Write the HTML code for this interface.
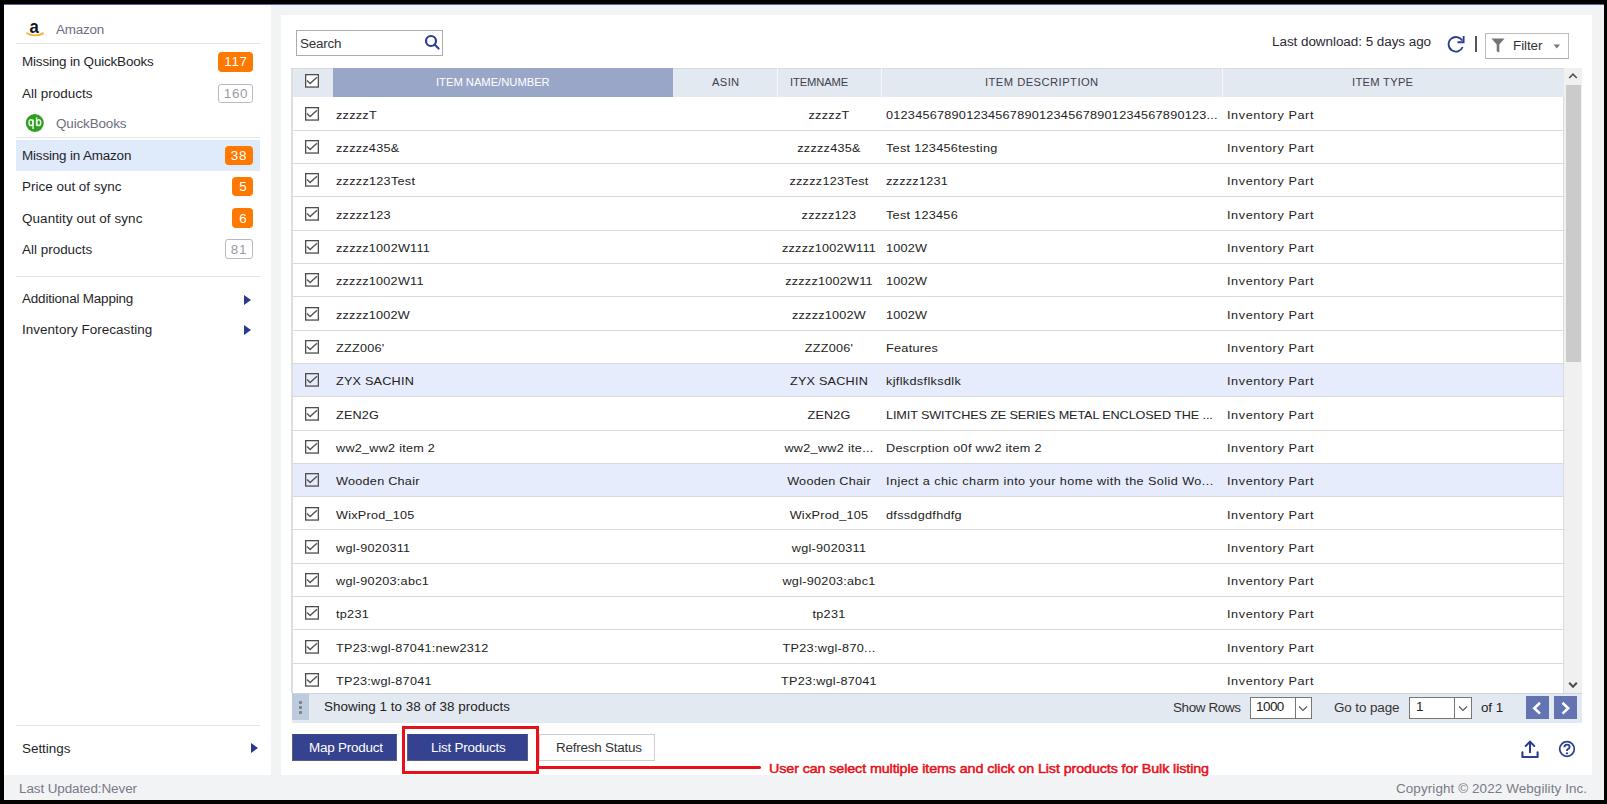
<!DOCTYPE html>
<html><head><meta charset="utf-8"><style>
*{margin:0;padding:0;box-sizing:border-box}
html,body{width:1607px;height:804px;overflow:hidden;background:#000;font-family:"Liberation Sans", sans-serif}
.a{position:absolute}
.t{position:absolute;white-space:pre;line-height:1;font-family:"Liberation Sans", sans-serif}
.rl{position:absolute;left:293px;width:1271px;height:1px;background:#d9d9d9}
.cb{position:absolute}
.div{position:absolute;left:16px;width:244px;height:1px;background:#e3e3e3}
.badge{position:absolute;background:#ff7800;border-radius:4px;height:19.5px}
.obadge{position:absolute;border:1.3px solid #b9b9c0;border-radius:3px;height:19.5px;background:#fff}
.tri{position:absolute;width:0;height:0;border-top:5px solid transparent;border-bottom:5px solid transparent;border-left:7.5px solid #2b3990}
</style></head><body>
<div class="a" style="left:4px;top:4px;width:1600px;height:796px;background:#f2f3f5"></div>
<div class="a" style="left:4px;top:4px;width:1600px;height:1px;background:#5668ad"></div>
<div class="a" style="left:4px;top:5px;width:267px;height:770px;background:#fff"></div>
<div class="a" style="left:281px;top:15px;width:1311px;height:760px;background:#fff"></div>
<div class="div" style="top:43px"></div>
<div class="div" style="top:137px"></div>
<div class="div" style="top:276px"></div>
<div class="div" style="top:725px"></div>
<div class="a" style="left:16px;top:140px;width:244px;height:31px;background:#dfeafb"></div>
<div class="badge" style="left:218px;top:52px;width:35px"></div>
<div class="obadge" style="left:218px;top:83.5px;width:35px"></div>
<div class="badge" style="left:225px;top:145.5px;width:28px"></div>
<div class="badge" style="left:232.3px;top:176.7px;width:20.7px"></div>
<div class="badge" style="left:232.3px;top:208px;width:20.7px"></div>
<div class="obadge" style="left:225px;top:239.2px;width:28px"></div>
<div class="tri" style="left:244px;top:294.6px"></div>
<div class="tri" style="left:244px;top:324.8px"></div>
<div class="tri" style="left:251px;top:743.2px"></div>
<svg class="a" style="left:0px;top:0px" width="60" height="60" viewBox="0 0 60 60"><text x="29.6" y="32.6" font-family="Liberation Sans" font-weight="bold" font-size="18.5" fill="#141414" textLength="9.3" lengthAdjust="spacingAndGlyphs">a</text><path d="M26.9 33.3 Q34.5 37.4 42.6 33.6" fill="none" stroke="#f8b03c" stroke-width="1.8" stroke-linecap="round"/><circle cx="42.8" cy="33.4" r="1.1" fill="#f8b03c"/></svg>
<svg class="a" style="left:0px;top:100px" width="60" height="40" viewBox="0 100 60 40"><circle cx="34.8" cy="123" r="9" fill="#2ca01c"/><ellipse cx="31" cy="122.7" rx="2" ry="2.9" fill="none" stroke="#e6f3e3" stroke-width="1.5"/><path d="M33.1 119.6 L33.1 129" stroke="#e6f3e3" stroke-width="1.5"/><ellipse cx="38.7" cy="122.7" rx="2" ry="2.9" fill="none" stroke="#e6f3e3" stroke-width="1.5"/><path d="M36.6 117.2 L36.6 125.9" stroke="#e6f3e3" stroke-width="1.5"/></svg>
<div class="a" style="left:296px;top:30px;width:147px;height:26px;border:1px solid #adadad;background:#fff"></div>
<svg class="a" style="left:424px;top:34px" width="17" height="17" viewBox="0 0 17 17"><circle cx="7" cy="7" r="5" fill="none" stroke="#2b3d92" stroke-width="2.2"/><path d="M10.6 10.6 L14.6 14.6" stroke="#2b3d92" stroke-width="2.1" stroke-linecap="round"/></svg>
<svg class="a" style="left:1440px;top:30px" width="30" height="30" viewBox="1440 30 30 30"><path d="M1462.68 47.01 A7.3 7.3 0 1 1 1462.22 40.65" fill="none" stroke="#2b3d92" stroke-width="1.8"/><path d="M1457.4 42.3 L1463.6 42.3 L1463.6 36.1" fill="none" stroke="#2b3d92" stroke-width="1.9"/></svg>
<div class="a" style="left:1474.8px;top:36.2px;width:2px;height:15.5px;background:#555"></div>
<div class="a" style="left:1485px;top:33px;width:84px;height:26px;border:1px solid #bdbdbd;border-bottom-color:#aaa;background:#fff"></div>
<svg class="a" style="left:1491px;top:38px" width="14" height="15" viewBox="0 0 14 15"><path d="M0.5 0.5 L13.5 0.5 L8.3 6.5 L8.3 14.5 L5.7 13.2 L5.7 6.5 Z" fill="#757575"/></svg>
<svg class="a" style="left:1552.5px;top:43.5px" width="8" height="5" viewBox="0 0 8 5"><path d="M0.5 0.5 L7 0.5 L3.75 4.6 Z" fill="#777"/></svg>
<div class="a" style="left:292px;top:67.5px;width:1272px;height:29.5px;background:#e3e9f1;border-top:1.5px solid #d9d9d9"></div>
<div class="a" style="left:333px;top:68px;width:340px;height:29px;background:#99a6c8"></div>
<div class="a" style="left:777px;top:68px;width:1px;height:29px;background:#f4f6f9"></div>
<div class="a" style="left:881px;top:68px;width:1px;height:29px;background:#f4f6f9"></div>
<div class="a" style="left:1222px;top:68px;width:1px;height:29px;background:#f4f6f9"></div>
<svg class="a" style="left:305px;top:74px" width="14" height="14" viewBox="0 0 14 14"><rect x="0.65" y="0.65" width="12.7" height="12.4" fill="#fff" stroke="#4d4d4d" stroke-width="1.3"/><path d="M2 6.6 L5.1 9.6 L12 3.2" fill="none" stroke="#555" stroke-width="1.4"/></svg>
<div class="a" style="left:291px;top:67.5px;width:2px;height:625.5px;background:#dedede"></div>
<div class="a" style="left:1563px;top:97px;width:1px;height:596px;background:#dcdcdc"></div>
<div class="rl" style="top:130px"></div>
<svg class="cb" style="left:305px;top:106.80px" width="14" height="14" viewBox="0 0 14 14"><rect x="0.65" y="0.65" width="12.7" height="12.4" fill="none" stroke="#4d4d4d" stroke-width="1.3"/><path d="M2 6.6 L5.1 9.6 L12 3.2" fill="none" stroke="#555" stroke-width="1.4"/></svg>
<div class="rl" style="top:163px"></div>
<svg class="cb" style="left:305px;top:140.11px" width="14" height="14" viewBox="0 0 14 14"><rect x="0.65" y="0.65" width="12.7" height="12.4" fill="none" stroke="#4d4d4d" stroke-width="1.3"/><path d="M2 6.6 L5.1 9.6 L12 3.2" fill="none" stroke="#555" stroke-width="1.4"/></svg>
<div class="rl" style="top:196px"></div>
<svg class="cb" style="left:305px;top:173.42px" width="14" height="14" viewBox="0 0 14 14"><rect x="0.65" y="0.65" width="12.7" height="12.4" fill="none" stroke="#4d4d4d" stroke-width="1.3"/><path d="M2 6.6 L5.1 9.6 L12 3.2" fill="none" stroke="#555" stroke-width="1.4"/></svg>
<div class="rl" style="top:230px"></div>
<svg class="cb" style="left:305px;top:206.73px" width="14" height="14" viewBox="0 0 14 14"><rect x="0.65" y="0.65" width="12.7" height="12.4" fill="none" stroke="#4d4d4d" stroke-width="1.3"/><path d="M2 6.6 L5.1 9.6 L12 3.2" fill="none" stroke="#555" stroke-width="1.4"/></svg>
<div class="rl" style="top:263px"></div>
<svg class="cb" style="left:305px;top:240.04px" width="14" height="14" viewBox="0 0 14 14"><rect x="0.65" y="0.65" width="12.7" height="12.4" fill="none" stroke="#4d4d4d" stroke-width="1.3"/><path d="M2 6.6 L5.1 9.6 L12 3.2" fill="none" stroke="#555" stroke-width="1.4"/></svg>
<div class="rl" style="top:296px"></div>
<svg class="cb" style="left:305px;top:273.35px" width="14" height="14" viewBox="0 0 14 14"><rect x="0.65" y="0.65" width="12.7" height="12.4" fill="none" stroke="#4d4d4d" stroke-width="1.3"/><path d="M2 6.6 L5.1 9.6 L12 3.2" fill="none" stroke="#555" stroke-width="1.4"/></svg>
<div class="rl" style="top:330px"></div>
<svg class="cb" style="left:305px;top:306.66px" width="14" height="14" viewBox="0 0 14 14"><rect x="0.65" y="0.65" width="12.7" height="12.4" fill="none" stroke="#4d4d4d" stroke-width="1.3"/><path d="M2 6.6 L5.1 9.6 L12 3.2" fill="none" stroke="#555" stroke-width="1.4"/></svg>
<div class="rl" style="top:363px"></div>
<svg class="cb" style="left:305px;top:339.97px" width="14" height="14" viewBox="0 0 14 14"><rect x="0.65" y="0.65" width="12.7" height="12.4" fill="none" stroke="#4d4d4d" stroke-width="1.3"/><path d="M2 6.6 L5.1 9.6 L12 3.2" fill="none" stroke="#555" stroke-width="1.4"/></svg>
<div style="position:absolute;left:293px;top:364.48px;width:1270px;height:32.31px;background:#e6ecfb"></div>
<div class="rl" style="top:396px"></div>
<svg class="cb" style="left:305px;top:373.28px" width="14" height="14" viewBox="0 0 14 14"><rect x="0.65" y="0.65" width="12.7" height="12.4" fill="none" stroke="#4d4d4d" stroke-width="1.3"/><path d="M2 6.6 L5.1 9.6 L12 3.2" fill="none" stroke="#555" stroke-width="1.4"/></svg>
<div class="rl" style="top:430px"></div>
<svg class="cb" style="left:305px;top:406.59px" width="14" height="14" viewBox="0 0 14 14"><rect x="0.65" y="0.65" width="12.7" height="12.4" fill="none" stroke="#4d4d4d" stroke-width="1.3"/><path d="M2 6.6 L5.1 9.6 L12 3.2" fill="none" stroke="#555" stroke-width="1.4"/></svg>
<div class="rl" style="top:463px"></div>
<svg class="cb" style="left:305px;top:439.90px" width="14" height="14" viewBox="0 0 14 14"><rect x="0.65" y="0.65" width="12.7" height="12.4" fill="none" stroke="#4d4d4d" stroke-width="1.3"/><path d="M2 6.6 L5.1 9.6 L12 3.2" fill="none" stroke="#555" stroke-width="1.4"/></svg>
<div style="position:absolute;left:293px;top:464.41px;width:1270px;height:32.31px;background:#e6ecfb"></div>
<div class="rl" style="top:496px"></div>
<svg class="cb" style="left:305px;top:473.21px" width="14" height="14" viewBox="0 0 14 14"><rect x="0.65" y="0.65" width="12.7" height="12.4" fill="none" stroke="#4d4d4d" stroke-width="1.3"/><path d="M2 6.6 L5.1 9.6 L12 3.2" fill="none" stroke="#555" stroke-width="1.4"/></svg>
<div class="rl" style="top:529px"></div>
<svg class="cb" style="left:305px;top:506.52px" width="14" height="14" viewBox="0 0 14 14"><rect x="0.65" y="0.65" width="12.7" height="12.4" fill="none" stroke="#4d4d4d" stroke-width="1.3"/><path d="M2 6.6 L5.1 9.6 L12 3.2" fill="none" stroke="#555" stroke-width="1.4"/></svg>
<div class="rl" style="top:563px"></div>
<svg class="cb" style="left:305px;top:539.83px" width="14" height="14" viewBox="0 0 14 14"><rect x="0.65" y="0.65" width="12.7" height="12.4" fill="none" stroke="#4d4d4d" stroke-width="1.3"/><path d="M2 6.6 L5.1 9.6 L12 3.2" fill="none" stroke="#555" stroke-width="1.4"/></svg>
<div class="rl" style="top:596px"></div>
<svg class="cb" style="left:305px;top:573.14px" width="14" height="14" viewBox="0 0 14 14"><rect x="0.65" y="0.65" width="12.7" height="12.4" fill="none" stroke="#4d4d4d" stroke-width="1.3"/><path d="M2 6.6 L5.1 9.6 L12 3.2" fill="none" stroke="#555" stroke-width="1.4"/></svg>
<div class="rl" style="top:629px"></div>
<svg class="cb" style="left:305px;top:606.45px" width="14" height="14" viewBox="0 0 14 14"><rect x="0.65" y="0.65" width="12.7" height="12.4" fill="none" stroke="#4d4d4d" stroke-width="1.3"/><path d="M2 6.6 L5.1 9.6 L12 3.2" fill="none" stroke="#555" stroke-width="1.4"/></svg>
<div class="rl" style="top:663px"></div>
<svg class="cb" style="left:305px;top:639.76px" width="14" height="14" viewBox="0 0 14 14"><rect x="0.65" y="0.65" width="12.7" height="12.4" fill="none" stroke="#4d4d4d" stroke-width="1.3"/><path d="M2 6.6 L5.1 9.6 L12 3.2" fill="none" stroke="#555" stroke-width="1.4"/></svg>
<div class="rl" style="top:696px"></div>
<svg class="cb" style="left:305px;top:673.07px" width="14" height="14" viewBox="0 0 14 14"><rect x="0.65" y="0.65" width="12.7" height="12.4" fill="none" stroke="#4d4d4d" stroke-width="1.3"/><path d="M2 6.6 L5.1 9.6 L12 3.2" fill="none" stroke="#555" stroke-width="1.4"/></svg>
<div class="a" style="left:1564px;top:67.5px;width:17.5px;height:625px;background:#f0f0f0"></div>
<div class="a" style="left:1566px;top:85.3px;width:15px;height:276.5px;background:#cbcbcb"></div>
<svg class="a" style="left:1568px;top:72px" width="10" height="8" viewBox="0 0 10 8"><path d="M1.2 6 L5 2.2 L8.8 6" fill="none" stroke="#505050" stroke-width="1.6"/></svg>
<svg class="a" style="left:1568px;top:680.5px" width="10" height="8" viewBox="0 0 10 8"><path d="M1.2 1.8 L5 5.8 L8.8 1.8" fill="none" stroke="#4a4a4a" stroke-width="2"/></svg>
<div class="a" style="left:292px;top:692.6px;width:1290px;height:30.3px;background:#e3e9f1;border-top:1px solid #cfd4da"></div>
<div class="a" style="left:292px;top:693.5px;width:17px;height:26.5px;background:#bccbdd"></div>
<div class="a" style="left:298.8px;top:701.4px;width:3.4px;height:2.8px;border-radius:0.8px;background:#808080"></div>
<div class="a" style="left:298.8px;top:706.2px;width:3.4px;height:2.8px;border-radius:0.8px;background:#808080"></div>
<div class="a" style="left:298.8px;top:711.0px;width:3.4px;height:2.8px;border-radius:0.8px;background:#808080"></div>
<div class="a" style="left:1250px;top:696.5px;width:62px;height:22.5px;border:1px solid #777;background:#fff"></div>
<div class="a" style="left:1295px;top:697px;width:1px;height:21.5px;background:#777"></div>
<svg class="a" style="left:1298px;top:704.5px" width="10" height="7" viewBox="0 0 10 7"><path d="M1 1.5 L5 5.5 L9 1.5" fill="none" stroke="#555" stroke-width="1.1"/></svg>
<div class="a" style="left:1409.4px;top:696.5px;width:62.2px;height:22.5px;border:1px solid #777;background:#fff"></div>
<div class="a" style="left:1454px;top:697px;width:1px;height:21.5px;background:#777"></div>
<svg class="a" style="left:1457.5px;top:704.5px" width="10" height="7" viewBox="0 0 10 7"><path d="M1 1.5 L5 5.5 L9 1.5" fill="none" stroke="#555" stroke-width="1.1"/></svg>
<div class="a" style="left:1526.2px;top:696.4px;width:22.7px;height:22.7px;background:#6474b2"></div>
<div class="a" style="left:1554.1px;top:696.4px;width:22.7px;height:22.7px;background:#6474b2"></div>
<svg class="a" style="left:1526.2px;top:696.4px" width="23" height="23" viewBox="0 0 23 23"><path d="M14 6.8 L8.3 12.2 L14 17.6" fill="none" stroke="#fff" stroke-width="2.6"/></svg>
<svg class="a" style="left:1554.1px;top:696.4px" width="23" height="23" viewBox="0 0 23 23"><path d="M8.5 6.8 L14.2 12.2 L8.5 17.6" fill="none" stroke="#fff" stroke-width="2.6"/></svg>
<div class="a" style="left:291.8px;top:734px;width:105px;height:27.4px;background:#34428f;border:1px solid #5a5f7a;border-top-color:#3a468f"></div>
<div class="a" style="left:407.2px;top:734px;width:120.5px;height:27.4px;background:#34428f;border:1px solid #5a5f7a;border-top-color:#3a468f"></div>
<div class="a" style="left:538.9px;top:734.4px;width:115.7px;height:27px;background:#fff;border:1px solid #cfcfcf"></div>
<div class="a" style="left:401.8px;top:725.6px;width:137px;height:48.2px;border:3.4px solid #e8101a"></div>
<div class="a" style="left:538px;top:766px;width:223px;height:3.2px;background:#e8101a;border-radius:0 2px 2px 0"></div>
<svg class="a" style="left:1520px;top:739px" width="20" height="20" viewBox="0 0 20 20"><path d="M10 2.5 L10 14" stroke="#2b3d92" stroke-width="2"/><path d="M5.7 7 L10 2.6 L14.3 7" fill="none" stroke="#2b3d92" stroke-width="2" stroke-linecap="round"/><path d="M2.4 13.2 L2.4 18 L17.6 18 L17.6 13.2" fill="none" stroke="#2b3d92" stroke-width="2.1" stroke-linejoin="round" stroke-linecap="round"/></svg>
<svg class="a" style="left:1557.5px;top:740.3px" width="18" height="18" viewBox="0 0 18 18"><circle cx="9" cy="9" r="7.3" fill="none" stroke="#2b3d92" stroke-width="1.7"/><path d="M6.4 7.2 Q6.4 4.6 9 4.6 Q11.6 4.6 11.6 6.9 Q11.6 8.4 9.9 9.1 Q9 9.5 9 11" fill="none" stroke="#2b3d92" stroke-width="1.9"/><circle cx="9" cy="13.3" r="1.1" fill="#2b3d92"/></svg>
<div class="t" id="t0" style="left:56.40px;top:24.14px;font-size:12px;color:#6e6e7e;letter-spacing:-0.181px;transform-origin:0 0;transform:scaleX(1.12)">Amazon</div>
<div class="t" id="t1" style="left:22.10px;top:56.14px;font-size:12px;color:#1f1f2a;letter-spacing:-0.152px;transform-origin:0 0;transform:scaleX(1.12)">Missing in QuickBooks</div>
<div class="t" id="t2" style="left:21.80px;top:88.14px;font-size:12px;color:#1f1f2a;letter-spacing:0.022px;transform-origin:0 0;transform:scaleX(1.12)">All products</div>
<div class="t" id="t3" style="left:56.00px;top:118.14px;font-size:12px;color:#6e6e7e;letter-spacing:-0.121px;transform-origin:0 0;transform:scaleX(1.12)">QuickBooks</div>
<div class="t" id="t4" style="left:22.00px;top:150.14px;font-size:12px;color:#1f1f2a;letter-spacing:-0.148px;transform-origin:0 0;transform:scaleX(1.12)">Missing in Amazon</div>
<div class="t" id="t5" style="left:22.00px;top:181.14px;font-size:12px;color:#1f1f2a;letter-spacing:0.008px;transform-origin:0 0;transform:scaleX(1.12)">Price out of sync</div>
<div class="t" id="t6" style="left:22.00px;top:212.64px;font-size:12px;color:#1f1f2a;letter-spacing:0.076px;transform-origin:0 0;transform:scaleX(1.12)">Quantity out of sync</div>
<div class="t" id="t7" style="left:22.00px;top:243.74px;font-size:12px;color:#1f1f2a;letter-spacing:0.006px;transform-origin:0 0;transform:scaleX(1.12)">All products</div>
<div class="t" id="t8" style="left:22.00px;top:293.44px;font-size:12px;color:#1f1f2a;letter-spacing:-0.159px;transform-origin:0 0;transform:scaleX(1.12)">Additional Mapping</div>
<div class="t" id="t9" style="left:22.00px;top:323.84px;font-size:12px;color:#1f1f2a;letter-spacing:0.043px;transform-origin:0 0;transform:scaleX(1.12)">Inventory Forecasting</div>
<div class="t" id="t10" style="left:22.10px;top:742.74px;font-size:12px;color:#1f1f2a;letter-spacing:-0.021px;transform-origin:0 0;transform:scaleX(1.12)">Settings</div>
<div class="t" id="t11" style="left:18.70px;top:783.14px;font-size:12px;color:#787888;letter-spacing:-0.081px;transform-origin:0 0;transform:scaleX(1.12)">Last Updated:Never</div>
<div class="t" id="t12" style="left:235.50px;top:56.14px;font-size:12px;color:#fff;letter-spacing:0.600px;transform-origin:50% 0;transform:translateX(-50%) scaleX(1.12)">117</div>
<div class="t" id="t13" style="left:235.50px;top:88.14px;font-size:12px;color:#9a9aa6;letter-spacing:0.600px;transform-origin:50% 0;transform:translateX(-50%) scaleX(1.12)">160</div>
<div class="t" id="t14" style="left:239.00px;top:150.14px;font-size:12px;color:#fff;letter-spacing:0.600px;transform-origin:50% 0;transform:translateX(-50%) scaleX(1.12)">38</div>
<div class="t" id="t15" style="left:242.70px;top:181.14px;font-size:12px;color:#fff;letter-spacing:0.000px;transform-origin:50% 0;transform:translateX(-50%) scaleX(1.12)">5</div>
<div class="t" id="t16" style="left:242.70px;top:212.64px;font-size:12px;color:#fff;letter-spacing:0.000px;transform-origin:50% 0;transform:translateX(-50%) scaleX(1.12)">6</div>
<div class="t" id="t17" style="left:239.00px;top:243.74px;font-size:12px;color:#9a9aa6;letter-spacing:0.600px;transform-origin:50% 0;transform:translateX(-50%) scaleX(1.12)">81</div>
<div class="t" id="t18" style="left:300.30px;top:37.84px;font-size:12px;color:#333;letter-spacing:-0.196px;transform-origin:0 0;transform:scaleX(1.12)">Search</div>
<div class="t" id="t19" style="left:1272.20px;top:35.74px;font-size:12px;color:#2a2a35;letter-spacing:-0.030px;transform-origin:0 0;transform:scaleX(1.12)">Last download: 5 days ago</div>
<div class="t" id="t20" style="left:1512.70px;top:39.54px;font-size:12px;color:#333;letter-spacing:-0.067px;transform-origin:0 0;transform:scaleX(1.12)">Filter</div>
<div class="t" id="t21" style="left:436.00px;top:77.93px;font-size:10px;color:#ffffff;letter-spacing:-0.010px;transform-origin:0 0;transform:scaleX(1.12)">ITEM NAME/NUMBER</div>
<div class="t" id="t22" style="left:711.50px;top:77.93px;font-size:10px;color:#40404c;letter-spacing:0.314px;transform-origin:0 0;transform:scaleX(1.12)">ASIN</div>
<div class="t" id="t23" style="left:789.90px;top:77.93px;font-size:10px;color:#40404c;letter-spacing:-0.117px;transform-origin:0 0;transform:scaleX(1.12)">ITEMNAME</div>
<div class="t" id="t24" style="left:985.30px;top:77.93px;font-size:10px;color:#40404c;letter-spacing:0.404px;transform-origin:0 0;transform:scaleX(1.12)">ITEM DESCRIPTION</div>
<div class="t" id="t25" style="left:1352.00px;top:77.93px;font-size:10px;color:#40404c;letter-spacing:0.243px;transform-origin:0 0;transform:scaleX(1.12)">ITEM TYPE</div>
<div class="t" id="t26" style="left:336.20px;top:109.83px;font-size:11.3px;color:#222;letter-spacing:0.233px;transform-origin:0 0;transform:scaleX(1.12)">zzzzzT</div>
<div class="t" id="t27" style="left:829.20px;top:109.83px;font-size:11.3px;color:#222;letter-spacing:0.233px;transform-origin:50% 0;transform:translateX(-50%) scaleX(1.12)">zzzzzT</div>
<div class="t" id="t28" style="left:886.00px;top:109.83px;font-size:11.3px;color:#222;letter-spacing:0.222px;transform-origin:0 0;transform:scaleX(1.12)">01234567890123456789012345678901234567890123...</div>
<div class="t" id="t29" style="left:1226.50px;top:109.83px;font-size:11.3px;color:#222;letter-spacing:0.524px;transform-origin:0 0;transform:scaleX(1.12)">Inventory Part</div>
<div class="t" id="t30" style="left:336.20px;top:143.14px;font-size:11.3px;color:#222;letter-spacing:0.222px;transform-origin:0 0;transform:scaleX(1.12)">zzzzz435&amp;</div>
<div class="t" id="t31" style="left:829.20px;top:143.14px;font-size:11.3px;color:#222;letter-spacing:0.222px;transform-origin:50% 0;transform:translateX(-50%) scaleX(1.12)">zzzzz435&amp;</div>
<div class="t" id="t32" style="left:886.00px;top:143.14px;font-size:11.3px;color:#222;letter-spacing:0.264px;transform-origin:0 0;transform:scaleX(1.12)">Test 123456testing</div>
<div class="t" id="t33" style="left:1226.50px;top:143.14px;font-size:11.3px;color:#222;letter-spacing:0.524px;transform-origin:0 0;transform:scaleX(1.12)">Inventory Part</div>
<div class="t" id="t34" style="left:336.20px;top:176.45px;font-size:11.3px;color:#222;letter-spacing:0.244px;transform-origin:0 0;transform:scaleX(1.12)">zzzzz123Test</div>
<div class="t" id="t35" style="left:829.20px;top:176.45px;font-size:11.3px;color:#222;letter-spacing:0.244px;transform-origin:50% 0;transform:translateX(-50%) scaleX(1.12)">zzzzz123Test</div>
<div class="t" id="t36" style="left:886.00px;top:176.45px;font-size:11.3px;color:#222;letter-spacing:0.230px;transform-origin:0 0;transform:scaleX(1.12)">zzzzz1231</div>
<div class="t" id="t37" style="left:1226.50px;top:176.45px;font-size:11.3px;color:#222;letter-spacing:0.524px;transform-origin:0 0;transform:scaleX(1.12)">Inventory Part</div>
<div class="t" id="t38" style="left:336.20px;top:209.76px;font-size:11.3px;color:#222;letter-spacing:0.233px;transform-origin:0 0;transform:scaleX(1.12)">zzzzz123</div>
<div class="t" id="t39" style="left:829.20px;top:209.76px;font-size:11.3px;color:#222;letter-spacing:0.233px;transform-origin:50% 0;transform:translateX(-50%) scaleX(1.12)">zzzzz123</div>
<div class="t" id="t40" style="left:886.00px;top:209.76px;font-size:11.3px;color:#222;letter-spacing:0.247px;transform-origin:0 0;transform:scaleX(1.12)">Test 123456</div>
<div class="t" id="t41" style="left:1226.50px;top:209.76px;font-size:11.3px;color:#222;letter-spacing:0.524px;transform-origin:0 0;transform:scaleX(1.12)">Inventory Part</div>
<div class="t" id="t42" style="left:336.20px;top:243.07px;font-size:11.3px;color:#222;letter-spacing:0.213px;transform-origin:0 0;transform:scaleX(1.12)">zzzzz1002W111</div>
<div class="t" id="t43" style="left:829.20px;top:243.07px;font-size:11.3px;color:#222;letter-spacing:0.213px;transform-origin:50% 0;transform:translateX(-50%) scaleX(1.12)">zzzzz1002W111</div>
<div class="t" id="t44" style="left:886.00px;top:243.07px;font-size:11.3px;color:#222;letter-spacing:0.168px;transform-origin:0 0;transform:scaleX(1.12)">1002W</div>
<div class="t" id="t45" style="left:1226.50px;top:243.07px;font-size:11.3px;color:#222;letter-spacing:0.524px;transform-origin:0 0;transform:scaleX(1.12)">Inventory Part</div>
<div class="t" id="t46" style="left:336.20px;top:276.38px;font-size:11.3px;color:#222;letter-spacing:0.210px;transform-origin:0 0;transform:scaleX(1.12)">zzzzz1002W11</div>
<div class="t" id="t47" style="left:829.20px;top:276.38px;font-size:11.3px;color:#222;letter-spacing:0.210px;transform-origin:50% 0;transform:translateX(-50%) scaleX(1.12)">zzzzz1002W11</div>
<div class="t" id="t48" style="left:886.00px;top:276.38px;font-size:11.3px;color:#222;letter-spacing:0.168px;transform-origin:0 0;transform:scaleX(1.12)">1002W</div>
<div class="t" id="t49" style="left:1226.50px;top:276.38px;font-size:11.3px;color:#222;letter-spacing:0.524px;transform-origin:0 0;transform:scaleX(1.12)">Inventory Part</div>
<div class="t" id="t50" style="left:336.20px;top:309.69px;font-size:11.3px;color:#222;letter-spacing:0.205px;transform-origin:0 0;transform:scaleX(1.12)">zzzzz1002W</div>
<div class="t" id="t51" style="left:829.20px;top:309.69px;font-size:11.3px;color:#222;letter-spacing:0.205px;transform-origin:50% 0;transform:translateX(-50%) scaleX(1.12)">zzzzz1002W</div>
<div class="t" id="t52" style="left:886.00px;top:309.69px;font-size:11.3px;color:#222;letter-spacing:0.168px;transform-origin:0 0;transform:scaleX(1.12)">1002W</div>
<div class="t" id="t53" style="left:1226.50px;top:309.69px;font-size:11.3px;color:#222;letter-spacing:0.524px;transform-origin:0 0;transform:scaleX(1.12)">Inventory Part</div>
<div class="t" id="t54" style="left:336.20px;top:343.00px;font-size:11.3px;color:#222;letter-spacing:0.228px;transform-origin:0 0;transform:scaleX(1.12)">ZZZ006'</div>
<div class="t" id="t55" style="left:829.20px;top:343.00px;font-size:11.3px;color:#222;letter-spacing:0.228px;transform-origin:50% 0;transform:translateX(-50%) scaleX(1.12)">ZZZ006'</div>
<div class="t" id="t56" style="left:886.00px;top:343.00px;font-size:11.3px;color:#222;letter-spacing:0.247px;transform-origin:0 0;transform:scaleX(1.12)">Features</div>
<div class="t" id="t57" style="left:1226.50px;top:343.00px;font-size:11.3px;color:#222;letter-spacing:0.524px;transform-origin:0 0;transform:scaleX(1.12)">Inventory Part</div>
<div class="t" id="t58" style="left:336.20px;top:376.31px;font-size:11.3px;color:#222;letter-spacing:0.186px;transform-origin:0 0;transform:scaleX(1.12)">ZYX SACHIN</div>
<div class="t" id="t59" style="left:829.20px;top:376.31px;font-size:11.3px;color:#222;letter-spacing:0.186px;transform-origin:50% 0;transform:translateX(-50%) scaleX(1.12)">ZYX SACHIN</div>
<div class="t" id="t60" style="left:886.00px;top:376.31px;font-size:11.3px;color:#222;letter-spacing:0.304px;transform-origin:0 0;transform:scaleX(1.12)">kjflkdsflksdlk</div>
<div class="t" id="t61" style="left:1226.50px;top:376.31px;font-size:11.3px;color:#222;letter-spacing:0.524px;transform-origin:0 0;transform:scaleX(1.12)">Inventory Part</div>
<div class="t" id="t62" style="left:336.20px;top:409.62px;font-size:11.3px;color:#222;letter-spacing:0.147px;transform-origin:0 0;transform:scaleX(1.12)">ZEN2G</div>
<div class="t" id="t63" style="left:829.20px;top:409.62px;font-size:11.3px;color:#222;letter-spacing:0.147px;transform-origin:50% 0;transform:translateX(-50%) scaleX(1.12)">ZEN2G</div>
<div class="t" id="t64" style="left:886.00px;top:409.62px;font-size:11.3px;color:#222;letter-spacing:-0.102px;transform-origin:0 0;transform:scaleX(1.12)">LIMIT SWITCHES ZE SERIES METAL ENCLOSED THE ...</div>
<div class="t" id="t65" style="left:1226.50px;top:409.62px;font-size:11.3px;color:#222;letter-spacing:0.524px;transform-origin:0 0;transform:scaleX(1.12)">Inventory Part</div>
<div class="t" id="t66" style="left:336.20px;top:442.93px;font-size:11.3px;color:#222;letter-spacing:0.221px;transform-origin:0 0;transform:scaleX(1.12)">ww2_ww2 item 2</div>
<div class="t" id="t67" style="left:829.20px;top:442.93px;font-size:11.3px;color:#222;letter-spacing:0.256px;transform-origin:50% 0;transform:translateX(-50%) scaleX(1.12)">ww2_ww2 ite...</div>
<div class="t" id="t68" style="left:886.00px;top:442.93px;font-size:11.3px;color:#222;letter-spacing:0.263px;transform-origin:0 0;transform:scaleX(1.12)">Descrption o0f ww2 item 2</div>
<div class="t" id="t69" style="left:1226.50px;top:442.93px;font-size:11.3px;color:#222;letter-spacing:0.524px;transform-origin:0 0;transform:scaleX(1.12)">Inventory Part</div>
<div class="t" id="t70" style="left:336.20px;top:476.24px;font-size:11.3px;color:#222;letter-spacing:0.226px;transform-origin:0 0;transform:scaleX(1.12)">Wooden Chair</div>
<div class="t" id="t71" style="left:829.20px;top:476.24px;font-size:11.3px;color:#222;letter-spacing:0.226px;transform-origin:50% 0;transform:translateX(-50%) scaleX(1.12)">Wooden Chair</div>
<div class="t" id="t72" style="left:886.00px;top:476.24px;font-size:11.3px;color:#222;letter-spacing:0.379px;transform-origin:0 0;transform:scaleX(1.12)">Inject a chic charm into your home with the Solid Wo...</div>
<div class="t" id="t73" style="left:1226.50px;top:476.24px;font-size:11.3px;color:#222;letter-spacing:0.524px;transform-origin:0 0;transform:scaleX(1.12)">Inventory Part</div>
<div class="t" id="t74" style="left:336.20px;top:509.55px;font-size:11.3px;color:#222;letter-spacing:0.217px;transform-origin:0 0;transform:scaleX(1.12)">WixProd_105</div>
<div class="t" id="t75" style="left:829.20px;top:509.55px;font-size:11.3px;color:#222;letter-spacing:0.217px;transform-origin:50% 0;transform:translateX(-50%) scaleX(1.12)">WixProd_105</div>
<div class="t" id="t76" style="left:886.00px;top:509.55px;font-size:11.3px;color:#222;letter-spacing:0.257px;transform-origin:0 0;transform:scaleX(1.12)">dfssdgdfhdfg</div>
<div class="t" id="t77" style="left:1226.50px;top:509.55px;font-size:11.3px;color:#222;letter-spacing:0.524px;transform-origin:0 0;transform:scaleX(1.12)">Inventory Part</div>
<div class="t" id="t78" style="left:336.20px;top:542.86px;font-size:11.3px;color:#222;letter-spacing:0.236px;transform-origin:0 0;transform:scaleX(1.12)">wgl-9020311</div>
<div class="t" id="t79" style="left:829.20px;top:542.86px;font-size:11.3px;color:#222;letter-spacing:0.236px;transform-origin:50% 0;transform:translateX(-50%) scaleX(1.12)">wgl-9020311</div>
<div class="t" id="t80" style="left:1226.50px;top:542.86px;font-size:11.3px;color:#222;letter-spacing:0.524px;transform-origin:0 0;transform:scaleX(1.12)">Inventory Part</div>
<div class="t" id="t81" style="left:336.20px;top:576.17px;font-size:11.3px;color:#222;letter-spacing:0.242px;transform-origin:0 0;transform:scaleX(1.12)">wgl-90203:abc1</div>
<div class="t" id="t82" style="left:829.20px;top:576.17px;font-size:11.3px;color:#222;letter-spacing:0.242px;transform-origin:50% 0;transform:translateX(-50%) scaleX(1.12)">wgl-90203:abc1</div>
<div class="t" id="t83" style="left:1226.50px;top:576.17px;font-size:11.3px;color:#222;letter-spacing:0.524px;transform-origin:0 0;transform:scaleX(1.12)">Inventory Part</div>
<div class="t" id="t84" style="left:336.20px;top:609.48px;font-size:11.3px;color:#222;letter-spacing:0.242px;transform-origin:0 0;transform:scaleX(1.12)">tp231</div>
<div class="t" id="t85" style="left:829.20px;top:609.48px;font-size:11.3px;color:#222;letter-spacing:0.242px;transform-origin:50% 0;transform:translateX(-50%) scaleX(1.12)">tp231</div>
<div class="t" id="t86" style="left:1226.50px;top:609.48px;font-size:11.3px;color:#222;letter-spacing:0.524px;transform-origin:0 0;transform:scaleX(1.12)">Inventory Part</div>
<div class="t" id="t87" style="left:336.20px;top:642.79px;font-size:11.3px;color:#222;letter-spacing:0.228px;transform-origin:0 0;transform:scaleX(1.12)">TP23:wgl-87041:new2312</div>
<div class="t" id="t88" style="left:829.20px;top:642.79px;font-size:11.3px;color:#222;letter-spacing:0.264px;transform-origin:50% 0;transform:translateX(-50%) scaleX(1.12)">TP23:wgl-870...</div>
<div class="t" id="t89" style="left:1226.50px;top:642.79px;font-size:11.3px;color:#222;letter-spacing:0.524px;transform-origin:0 0;transform:scaleX(1.12)">Inventory Part</div>
<div class="t" id="t90" style="left:336.20px;top:676.10px;font-size:11.3px;color:#222;letter-spacing:0.232px;transform-origin:0 0;transform:scaleX(1.12)">TP23:wgl-87041</div>
<div class="t" id="t91" style="left:829.20px;top:676.10px;font-size:11.3px;color:#222;letter-spacing:0.232px;transform-origin:50% 0;transform:translateX(-50%) scaleX(1.12)">TP23:wgl-87041</div>
<div class="t" id="t92" style="left:1226.50px;top:676.10px;font-size:11.3px;color:#222;letter-spacing:0.524px;transform-origin:0 0;transform:scaleX(1.12)">Inventory Part</div>
<div class="t" id="t93" style="left:324.00px;top:701.14px;font-size:12px;color:#222;letter-spacing:0.021px;transform-origin:0 0;transform:scaleX(1.12)">Showing 1 to 38 of 38 products</div>
<div class="t" id="t94" style="left:1173.20px;top:701.94px;font-size:12px;color:#333;letter-spacing:-0.331px;transform-origin:0 0;transform:scaleX(1.12)">Show Rows</div>
<div class="t" id="t95" style="left:1255.80px;top:701.14px;font-size:12px;color:#222;letter-spacing:-0.478px;transform-origin:0 0;transform:scaleX(1.12)">1000</div>
<div class="t" id="t96" style="left:1334.20px;top:701.64px;font-size:12px;color:#333;letter-spacing:-0.091px;transform-origin:0 0;transform:scaleX(1.12)">Go to page</div>
<div class="t" id="t97" style="left:1415.80px;top:701.14px;font-size:12px;color:#222;letter-spacing:0.000px;transform-origin:0 0;transform:scaleX(1.12)">1</div>
<div class="t" id="t98" style="left:1480.50px;top:701.64px;font-size:12px;color:#222;letter-spacing:-0.094px;transform-origin:0 0;transform:scaleX(1.12)">of 1</div>
<div class="t" id="t99" style="left:309.30px;top:741.74px;font-size:12px;color:#ffffff;letter-spacing:-0.189px;transform-origin:0 0;transform:scaleX(1.12)">Map Product</div>
<div class="t" id="t100" style="left:431.40px;top:741.74px;font-size:12px;color:#ffffff;letter-spacing:-0.216px;transform-origin:0 0;transform:scaleX(1.12)">List Products</div>
<div class="t" id="t101" style="left:555.60px;top:741.54px;font-size:12px;color:#333;letter-spacing:-0.199px;transform-origin:0 0;transform:scaleX(1.12)">Refresh Status</div>
<div class="t" id="t102" style="left:768.60px;top:761.50px;font-size:13px;color:#e8101a;letter-spacing:-0.092px;-webkit-text-stroke:0.5px #e8101a;transform-origin:0 0;transform:scaleX(1.1)">User can select multiple items and click on List products for Bulk listing</div>
<div class="t" id="t103" style="left:1396.20px;top:783.34px;font-size:12px;color:#7a7a88;letter-spacing:0.086px;transform-origin:0 0;transform:scaleX(1.12)">Copyright © 2022 Webgility Inc.</div>
</body></html>
